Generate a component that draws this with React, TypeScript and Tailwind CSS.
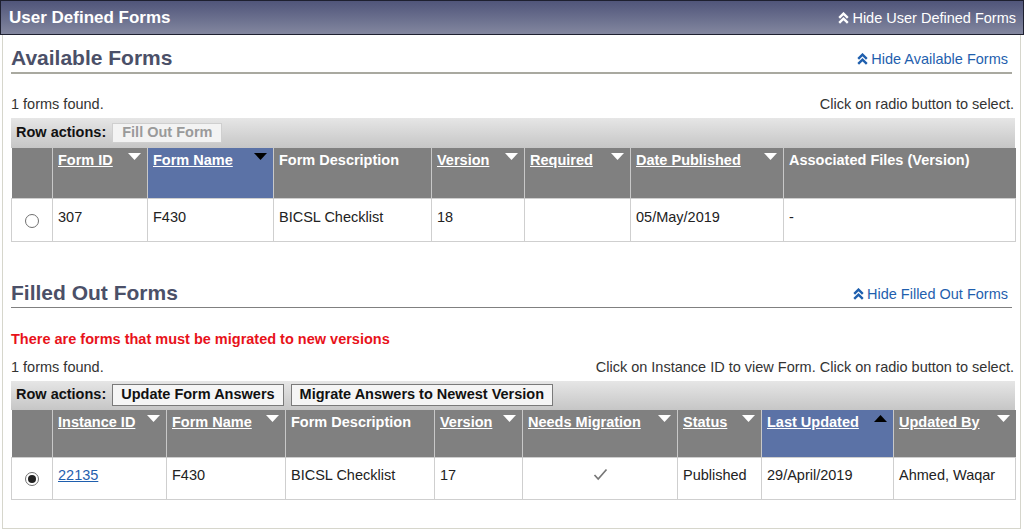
import React from "react";

const Chevrons = ({ color }: { color: string }) => (
  <svg width="11" height="12" viewBox="0 0 11 12" className="inline-block mr-[3px]">
    <path d="M1.2 5.8 L5.5 1.6 L9.8 5.8" fill="none" stroke={color} strokeWidth="2.4" />
    <path d="M1.2 10.8 L5.5 6.6 L9.8 10.8" fill="none" stroke={color} strokeWidth="2.4" />
  </svg>
);

const Tri = ({ up, dark }: { up?: boolean; dark?: boolean }) => (
  <svg width="13" height="7" viewBox="0 0 13 7" className="absolute right-[6px] top-[5px]">
    <polygon points={up ? "0,7 13,7 6.5,0" : "0,0 13,0 6.5,7"} fill={dark ? "#000" : "#fff"} />
  </svg>
);

type Col = { label: string; w: number; sort?: boolean; active?: "up" | "down"; link?: boolean };

const Header = ({ cols, h }: { cols: Col[]; h: number }) => (
  <tr style={{ height: h }}>
    <th className="w-[41px] bg-[#808080] border-r border-[#c8c8c8]"></th>
    {cols.map((c, i) => (
      <th
        key={i}
        style={{ width: c.w }}
        className={`relative align-top text-left pl-[5px] pt-[4px] font-bold text-[14.5px] leading-[16px] text-white border-r border-[#c8c8c8] last:border-r-0 ${
          c.active ? "bg-[#5b72a6]" : "bg-[#808080]"
        }`}
      >
        <span className={c.link ? "underline" : ""}>{c.label}</span>
        {c.sort && <Tri up={c.active === "up"} dark={!!c.active} />}
      </th>
    ))}
  </tr>
);

const Radio = ({ checked, top }: { checked?: boolean; top: number }) => (
  <div className="flex justify-center" style={{ paddingTop: top }}>
    <div className="w-[14px] h-[14px] rounded-full border border-[#707070] bg-white flex items-center justify-center">
      {checked && <div className="w-[8px] h-[8px] rounded-full bg-[#222]" />}
    </div>
  </div>
);

const Td = ({ children, h, pt }: { children?: React.ReactNode; h: number; pt: number }) => (
  <td
    className="align-top pl-[5px] text-[14.5px] leading-[16px] text-[#222] border border-[#cfcfcf]"
    style={{ height: h, paddingTop: pt }}
  >
    {children}
  </td>
);

export default function App() {
  const availCols: Col[] = [
    { label: "Form ID", w: 95, sort: true, link: true },
    { label: "Form Name", w: 126, sort: true, active: "down", link: true },
    { label: "Form Description", w: 158 },
    { label: "Version", w: 93, sort: true, link: true },
    { label: "Required", w: 106, sort: true, link: true },
    { label: "Date Published", w: 153, sort: true, link: true },
    { label: "Associated Files (Version)", w: 232 },
  ];
  const filledCols: Col[] = [
    { label: "Instance ID", w: 114, sort: true, link: true },
    { label: "Form Name", w: 119, sort: true, link: true },
    { label: "Form Description", w: 149 },
    { label: "Version", w: 88, sort: true, link: true },
    { label: "Needs Migration", w: 155, sort: true, link: true },
    { label: "Status", w: 84, sort: true, link: true },
    { label: "Last Updated", w: 132, sort: true, active: "up", link: true },
    { label: "Updated By", w: 122, sort: true, link: true },
  ];

  return (
    <div className="w-[1024px] h-[531px] bg-white font-['Liberation_Sans',Arial,sans-serif] overflow-hidden">
      <div className="h-[35px] border border-[#1e2030] bg-gradient-to-b from-[#50557a] to-[#83879f] flex items-center justify-between pl-[8px] pr-[7px]">
        <span className="text-white font-bold text-[17px] leading-[20px]">User Defined Forms</span>
        <span className="text-white text-[14.5px] leading-[16px] flex items-center">
          <Chevrons color="#fff" />
          Hide User Defined Forms
        </span>
      </div>
      <div className="ml-[2px] mr-[3px] h-[494px] border-l border-r border-b border-[#d6d6cc] pl-[8px] pr-[6px]">
        {/* Available Forms */}
        <div className="pt-[11px] flex items-end justify-between border-b-2 border-[#a9a9a0] pb-[2px] mr-[2px]">
          <span className="font-bold text-[21px] leading-[24px] text-[#4b5068]">Available Forms</span>
          <span className="text-[14.5px] leading-[16px] text-[#1f5fae] flex items-center mb-[3px] mr-[4px]">
            <Chevrons color="#1f5fae" />
            Hide Available Forms
          </span>
        </div>
        <div className="mt-[22px] flex justify-between text-[14.5px] leading-[16px] text-[#333]">
          <span>1 forms found.</span>
          <span>Click on radio button to select.</span>
        </div>
        <div className="mt-[6px] w-[1004px]">
          <div className="h-[30px] bg-gradient-to-b from-[#e6e6e6] to-[#c6c6c6] flex items-center pl-[5px] gap-[6px]">
            <span className="font-bold text-[14.5px] text-[#111]">Row actions:</span>
            <span className="h-[20px] px-[9px] flex items-center border border-[#cfcfcf] bg-[#f3f3f3] text-[#9a9a9a] font-bold text-[14.5px]">
              Fill Out Form
            </span>
          </div>
          <table className="border-collapse table-fixed w-[1004px]">
            <thead>
              <Header cols={availCols} h={50} />
            </thead>
            <tbody>
              <tr>
                <td className="align-top border border-[#cfcfcf] h-[43px]">
                  <Radio top={15} />
                </td>
                <Td h={43} pt={10}>307</Td>
                <Td h={43} pt={10}>F430</Td>
                <Td h={43} pt={10}>BICSL Checklist</Td>
                <Td h={43} pt={10}>18</Td>
                <Td h={43} pt={10}></Td>
                <Td h={43} pt={10}>05/May/2019</Td>
                <Td h={43} pt={10}>-</Td>
              </tr>
            </tbody>
          </table>
        </div>

        {/* Filled Out Forms */}
        <div className="mt-[39px] flex items-end justify-between border-b border-[#808080] pb-[2px] mr-[2px]">
          <span className="font-bold text-[21px] leading-[24px] text-[#4b5068]">Filled Out Forms</span>
          <span className="text-[14.5px] leading-[16px] text-[#1f5fae] flex items-center mb-[3px] mr-[4px]">
            <Chevrons color="#1f5fae" />
            Hide Filled Out Forms
          </span>
        </div>
        <div className="mt-[23px] text-[14.5px] leading-[16px] font-bold text-[#e8121a]">
          There are forms that must be migrated to new versions
        </div>
        <div className="mt-[12px] flex justify-between text-[14.5px] leading-[16px] text-[#333]">
          <span>1 forms found.</span>
          <span>Click on Instance ID to view Form. Click on radio button to select.</span>
        </div>
        <div className="mt-[6px] w-[1004px]">
          <div className="h-[29px] bg-gradient-to-b from-[#e6e6e6] to-[#c6c6c6] flex items-center pl-[5px] gap-[6px]">
            <span className="font-bold text-[14.5px] text-[#111]">Row actions:</span>
            <span className="h-[22px] px-[8px] flex items-center border border-[#7a7a7a] bg-[#f5f5f5] text-[#111] font-bold text-[14.5px]">
              Update Form Answers
            </span>
            <span className="ml-[1px] h-[22px] px-[8px] flex items-center border border-[#7a7a7a] bg-[#f5f5f5] text-[#111] font-bold text-[14.5px]">
              Migrate Answers to Newest Version
            </span>
          </div>
          <table className="border-collapse table-fixed w-[1004px]">
            <thead>
              <Header cols={filledCols} h={48} />
            </thead>
            <tbody>
              <tr>
                <td className="align-top border border-[#cfcfcf] h-[42px]">
                  <Radio checked top={14} />
                </td>
                <Td h={42} pt={9}>
                  <span className="text-[#1f5fae] underline">22135</span>
                </Td>
                <Td h={42} pt={9}>F430</Td>
                <Td h={42} pt={9}>BICSL Checklist</Td>
                <Td h={42} pt={9}>17</Td>
                <td className="align-top border border-[#cfcfcf] pt-[10px]">
                  <div className="flex justify-center">
                    <svg width="15" height="13" viewBox="0 0 15 13">
                      <path d="M1.5 7 L5.2 11 L13.5 1.5" fill="none" stroke="#777" strokeWidth="1.7" />
                    </svg>
                  </div>
                </td>
                <Td h={42} pt={9}>Published</Td>
                <Td h={42} pt={9}>29/April/2019</Td>
                <Td h={42} pt={9}>Ahmed, Waqar</Td>
              </tr>
            </tbody>
          </table>
        </div>
      </div>
    </div>
  );
}
